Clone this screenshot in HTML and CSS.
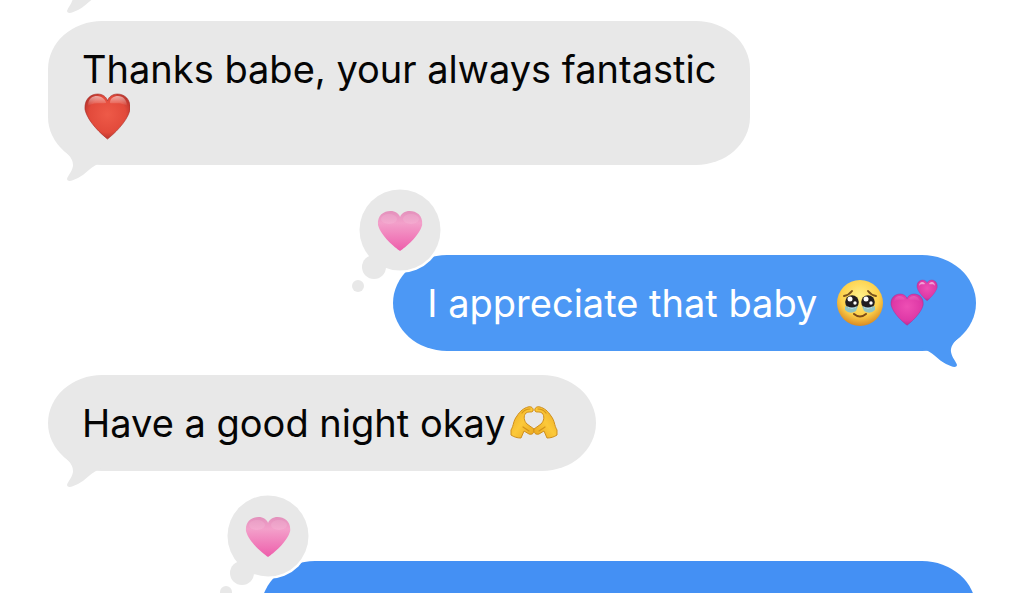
FILE: index.html
```html
<!DOCTYPE html>
<html lang="en">
<head>
<meta charset="utf-8">
<meta name="viewport" content="width=device-width, initial-scale=1">
<title>Messages</title>
<link rel="stylesheet" href="styles.css">
</head>
<body>
<svg class="defs" width="0" height="0" aria-hidden="true">
  <defs>
    <linearGradient id="pink" x1="0" y1="0" x2="0" y2="1"><stop offset="0" stop-color="#e391bc"/><stop offset=".3" stop-color="#f3a0ca"/><stop offset="1" stop-color="#ee5dab"/></linearGradient>
    <radialGradient id="red" cx=".5" cy=".45" r=".62"><stop offset="0" stop-color="#ee5a48"/><stop offset=".65" stop-color="#e24a3b"/><stop offset="1" stop-color="#a82c28"/></radialGradient>
    <linearGradient id="shine" x1="0" y1="0" x2="0" y2="1"><stop offset="0" stop-color="#fff" stop-opacity=".55"/><stop offset="1" stop-color="#fff" stop-opacity="0"/></linearGradient>
    <radialGradient id="magenta" cx=".5" cy=".4" r=".65"><stop offset="0" stop-color="#ee4fb4"/><stop offset=".7" stop-color="#de38a6"/><stop offset="1" stop-color="#b02a8c"/></radialGradient>
    <radialGradient id="face" cx=".5" cy=".36" r=".64"><stop offset="0" stop-color="#fff08a"/><stop offset=".65" stop-color="#fdd04a"/><stop offset="1" stop-color="#d98a22"/></radialGradient>
    <linearGradient id="skin" x1="0" y1="0" x2="1" y2="1"><stop offset="0" stop-color="#e9a820"/><stop offset=".5" stop-color="#fcc93a"/><stop offset="1" stop-color="#e8a41c"/></linearGradient>
    <symbol id="tail" viewBox="0 0 60 60">
      <path d="M10 18C14 28 26 33 25 43C24 49 20 52 19 56C20 60 25 57 30 55C38 51 43 43 54 39V18Z"/>
    </symbol>
    <path id="heart" d="M23 46C18 42 3 29 0 16C-1 5 6 0 13 0C18 0 22 3 23 7C24 3 28 0 33 0C40 0 47 5 46 16C43 29 28 42 23 46Z"/>
    <symbol id="thought" viewBox="0 0 100 110">
      <circle class="thought-ring" cx="50" cy="43" r="43"/>
      <g class="thought-fill"><circle cx="50" cy="43" r="40.5"/><circle cx="24" cy="80" r="12"/><circle cx="8" cy="99" r="6"/></g>
      <use href="#heart" transform="translate(28 24) scale(.96 .87)" fill="url(#pink)"/>
      <ellipse cx="39" cy="32" rx="8" ry="5" fill="#fff" opacity=".1"/>
      <ellipse cx="61" cy="32" rx="8" ry="5" fill="#fff" opacity=".1"/>
    </symbol>
  </defs>
</svg>
<main class="thread">
  <div class="bubble received earlier"><svg class="tail" aria-hidden="true"><use href="#tail"/></svg></div>

  <div class="bubble received">
    <svg class="tail" aria-hidden="true"><use href="#tail"/></svg>
    <p class="text">Thanks babe, your always fantastic
      <svg class="emoji" viewBox="0 0 48 48" role="img" aria-label="Red heart">
        <use href="#heart" transform="translate(3 1) scale(.98)" fill="url(#red)" stroke="#a8302a" stroke-opacity=".6"/>
        <path d="M6 13C6 5 11 3 15 3C20 3 24 7 24 10C19 11 12 9 6 13ZM28 10C28 5 32 3 36 3C41 3 45 7 45 13C39 9 31 11 28 10Z" fill="url(#shine)"/>
      </svg>
    </p>
  </div>

  <div class="bubble sent reacted">
    <svg class="reaction" role="img" aria-label="Pink heart reaction"><use href="#thought"/></svg>
    <svg class="tail" aria-hidden="true"><use href="#tail"/></svg>
    <p class="text">I appreciate that baby
      <svg class="emoji apart" viewBox="0 0 48 48" role="img" aria-label="Face holding back tears">
        <circle cx="24" cy="24" r="23" fill="url(#face)"/>
        <path d="M8 17Q13 16 16 12M32 12Q35 16 40 17" fill="none" stroke="#79501b" stroke-width="2" stroke-linecap="round"/>
        <path d="M9 27Q16 31 22 27L20 32Q14 36 9 31ZM26 27Q32 31 39 27L39 31Q34 36 28 32Z" fill="#8fc4c4"/>
        <circle cx="16" cy="23" r="6.8" fill="#211d20"/><circle cx="32" cy="23" r="6.8" fill="#211d20"/>
        <circle cx="14" cy="20" r="2.5" fill="#fff"/><circle cx="19" cy="24" r="1.7" fill="#fff"/>
        <circle cx="30" cy="20" r="2.5" fill="#fff"/><circle cx="35" cy="24" r="1.7" fill="#fff"/>
        <path d="M11 27Q16 30 21 27Q20 30 16 30Q12 30 11 27ZM27 27Q32 30 37 27Q36 30 32 30Q28 30 27 27Z" fill="#b9e4ee"/>
        <path d="M18 35Q24 40 30 35" fill="none" stroke="#7c4b18" stroke-width="2" stroke-linecap="round"/>
      </svg><svg class="emoji" viewBox="0 0 48 48" role="img" aria-label="Two hearts">
        <use href="#heart" transform="translate(1 15) scale(.7 .68)" fill="url(#magenta)" stroke="#a32b8a" stroke-opacity=".6"/>
        <use href="#heart" transform="translate(27 1) scale(.44 .45)" fill="url(#magenta)" stroke="#a32b8a" stroke-opacity=".6"/>
        <path d="M4 23C4 16 12 15 15 20C12 22 8 19 4 23ZM19 20C21 15 29 16 30 23C25 19 22 22 19 20ZM29 7C29 2 34 2 35 5C33 6 31 4 29 7ZM39 5C40 2 45 2 45 7C43 4 41 6 39 5Z" fill="url(#shine)"/>
      </svg>
    </p>
  </div>

  <div class="bubble received">
    <svg class="tail" aria-hidden="true"><use href="#tail"/></svg>
    <p class="text">Have a good night okay<svg class="emoji joined" viewBox="0 0 48 48" role="img" aria-label="Heart hands">
        <g id="hand">
          <path d="M1 31C4 26 3 22 7 17C10 12 14 9 18 8C21 7 24 9 23 12C22 14 18 12 16 14C13 17 14 22 17 25L24 30C25 34 22 36 19 35L14 32L11 39C7 39 4 38 1 36Z" fill="url(#skin)" stroke="#cf8f1c" stroke-width="1" stroke-linejoin="round"/>
          <path d="M12 14Q15 10 20 10M13 28L19 32" fill="none" stroke="#d49419" stroke-width="1.2" stroke-linecap="round"/>
        </g>
        <use href="#hand" transform="translate(48 0) scale(-1 1)"/>
      </svg>
    </p>
  </div>

  <div class="bubble sent reacted latest">
    <svg class="reaction" role="img" aria-label="Pink heart reaction"><use href="#thought"/></svg>
  </div>
</main>
</body>
</html>
```
FILE: styles.css
```css
* { box-sizing: border-box; }

body {
  margin: 0;
  background: #fff;
  color: #050505;
  font-family: Inter, "Liberation Sans", sans-serif;
  font-size: 38px;
  line-height: 48px;
}

.defs { position: absolute; }

.thread {
  display: flex;
  flex-direction: column;
  gap: 24px;
  height: 100vh;
  overflow: hidden;
  padding: 0 48px;
}

.bubble {
  position: relative;
  flex: none;
  width: fit-content;
  min-height: 96px;
  max-width: 702px;
  padding: 24px 32px 24px 34px;
  border-radius: 54px / 48px;
}

.received {
  align-self: flex-start;
  background: #e8e8e8;
  fill: #e8e8e8;
}

.sent {
  align-self: flex-end;
  background: #4c98f5;
  fill: #4c98f5;
  color: #fff;
}

.reacted { margin-top: 66px; }

.earlier {
  width: 50%;
  margin-top: -99px;
}

.latest {
  width: 77%;
  max-width: none;
  background: #4490f4;
}

.text { margin: 0; }

.tail {
  position: absolute;
  bottom: -18px;
  left: 0;
  width: 60px;
  height: 60px;
}

.sent .tail {
  right: 0;
  left: auto;
  transform: scaleX(-1);
}

.emoji {
  width: 48px;
  height: 48px;
  margin-right: 6px;
  vertical-align: top;
}

.apart { margin-left: 8px; }

.joined { margin-left: 4px; }

.reaction {
  position: absolute;
  top: -68px;
  left: -43px;
  width: 100px;
  height: 110px;
}

.thought-ring { fill: #fff; }

.thought-fill { fill: #e8e8e8; }
```
